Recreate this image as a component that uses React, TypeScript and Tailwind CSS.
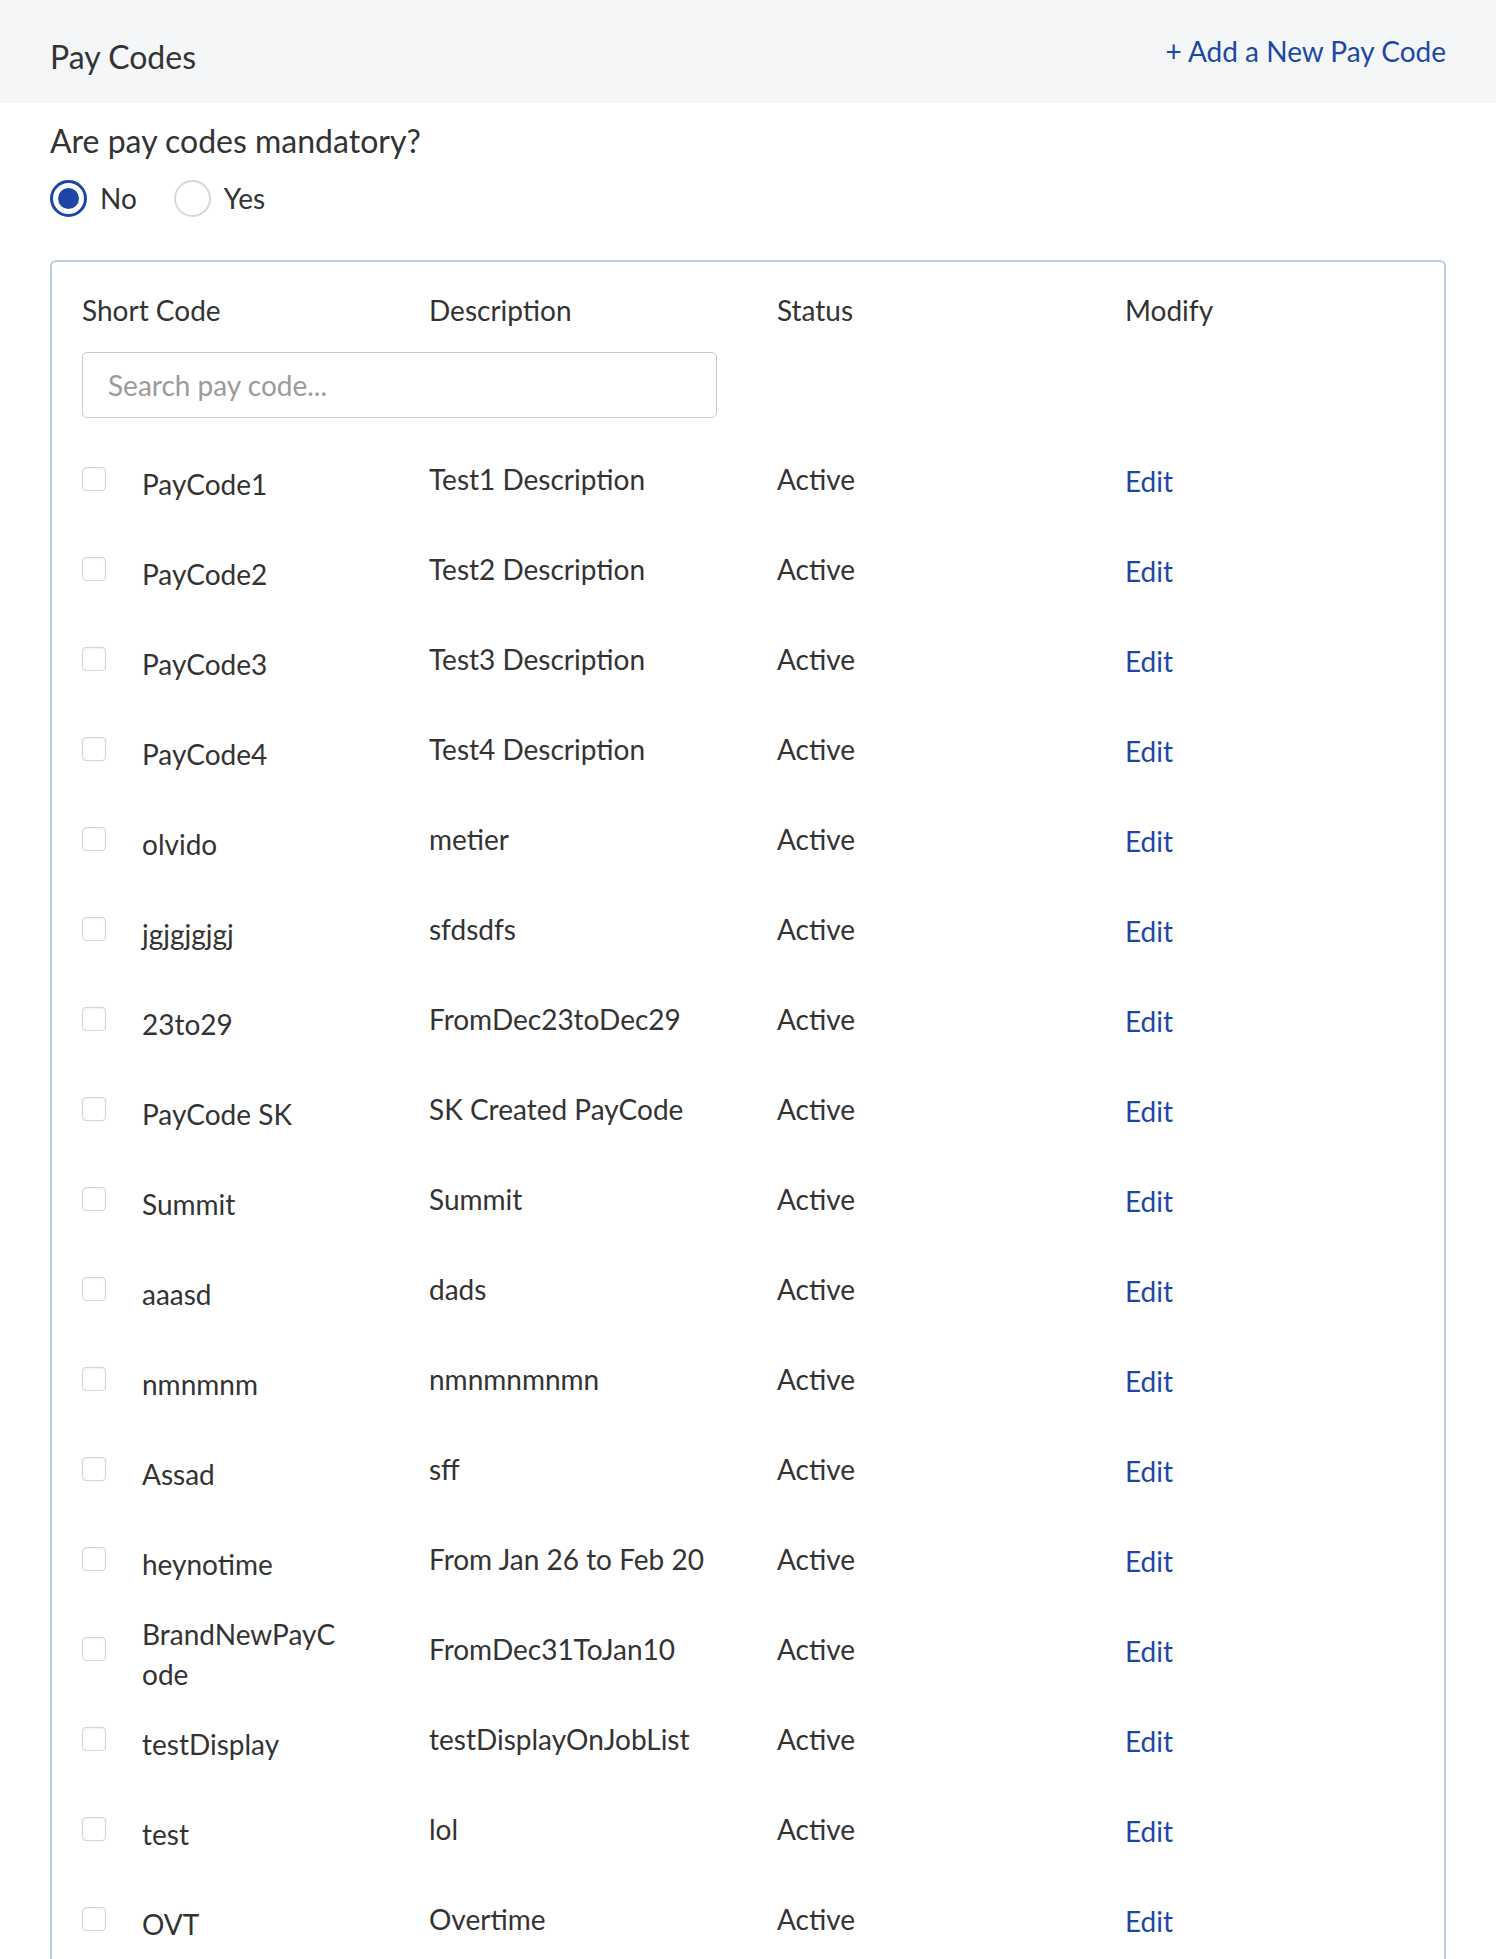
import { useState } from "react"

interface PayCode {
  code: string
  description: string
  status: string
}

const PAY_CODES: PayCode[] = [
  { code: "PayCode1", description: "Test1 Description", status: "Active" },
  { code: "PayCode2", description: "Test2 Description", status: "Active" },
  { code: "PayCode3", description: "Test3 Description", status: "Active" },
  { code: "PayCode4", description: "Test4 Description", status: "Active" },
  { code: "olvido", description: "metier", status: "Active" },
  { code: "jgjgjgjgj", description: "sfdsdfs", status: "Active" },
  { code: "23to29", description: "FromDec23toDec29", status: "Active" },
  { code: "PayCode SK", description: "SK Created PayCode", status: "Active" },
  { code: "Summit", description: "Summit", status: "Active" },
  { code: "aaasd", description: "dads", status: "Active" },
  { code: "nmnmnm", description: "nmnmnmnmn", status: "Active" },
  { code: "Assad", description: "sff", status: "Active" },
  { code: "heynotime", description: "From Jan 26 to Feb 20", status: "Active" },
  { code: "BrandNewPayCode", description: "FromDec31ToJan10", status: "Active" },
  { code: "testDisplay", description: "testDisplayOnJobList", status: "Active" },
  { code: "test", description: "lol", status: "Active" },
  { code: "OVT", description: "Overtime", status: "Active" },
]

function Radio({ checked, label, onClick }: { checked: boolean; label: string; onClick: () => void }) {
  return (
    <button type="button" onClick={onClick} className="flex items-center gap-[13px]">
      <span
        className={
          checked
            ? "flex h-[37px] w-[37px] items-center justify-center rounded-full border-[3px] border-[#1e47a5]"
            : "flex h-[37px] w-[37px] items-center justify-center rounded-full border-2 border-[#d5d9df]"
        }
      >
        {checked && <span className="h-[21px] w-[21px] rounded-full bg-[#1e47a5]" />}
      </span>
      <span className="text-[28px] leading-[40px] text-[#333]">{label}</span>
    </button>
  )
}

function Row({ item }: { item: PayCode }) {
  const [checked, setChecked] = useState(false)

  return (
    <div className="grid h-[90px] grid-cols-[347px_348px_348px_1fr] items-center">
      <div className="flex items-center">
        <input
          type="checkbox"
          checked={checked}
          onChange={(e) => setChecked(e.target.checked)}
          className="h-[24px] w-[24px] shrink-0 appearance-none rounded-[4px] border border-[#d4d4d4] bg-white shadow-[inset_0_1px_2px_rgba(0,0,0,0.06)] checked:bg-[#1e47a5]"
        />
        <div className="ml-[36px] w-[200px] break-all pt-[9px] leading-[40px]">{item.code}</div>
      </div>
      <div className="leading-[40px]">{item.description}</div>
      <div className="leading-[40px]">{item.status}</div>
      <div className="pt-[3px] leading-[40px]">
        <a href="#" className="text-[#1e47a5]">
          Edit
        </a>
      </div>
    </div>
  )
}

export default function App() {
  const [mandatory, setMandatory] = useState(false)
  const [search, setSearch] = useState("")

  const rows = PAY_CODES.filter((p) => {
    const q = search.trim().toLowerCase()
    if (!q) return true
    return p.code.toLowerCase().includes(q) || p.description.toLowerCase().includes(q)
  })

  return (
    <div className="min-h-screen bg-white font-['Lato','Liberation_Sans',sans-serif] text-[28px] text-[#333]">
      <div className="flex h-[103px] items-center justify-between bg-[#f5f6f8] px-[50px]">
        <h1 className="pt-[11px] text-[32px] leading-[40px] text-[#333]">Pay Codes</h1>
        <a href="#" className="pb-[1px] text-[28px] leading-[40px] text-[#1e47a5]">
          + Add a New Pay Code
        </a>
      </div>

      <div className="px-[50px]">
        <div className="mt-[18px] text-[32px] leading-[40px]">Are pay codes mandatory?</div>
        <div className="mt-[17px] flex items-center gap-[37px]">
          <Radio checked={!mandatory} label="No" onClick={() => setMandatory(false)} />
          <Radio checked={mandatory} label="Yes" onClick={() => setMandatory(true)} />
        </div>

        <div className="mt-[42px] rounded-[6px] border-2 border-[#bccfe2] px-[30px] pt-[28px]">
          <div className="grid grid-cols-[347px_348px_348px_1fr] leading-[40px]">
            <div>Short Code</div>
            <div>Description</div>
            <div>Status</div>
            <div>Modify</div>
          </div>
          <input
            value={search}
            onChange={(e) => setSearch(e.target.value)}
            placeholder="Search pay code..."
            className="mt-[22px] h-[66px] w-[635px] rounded-[5px] border-[1.5px] border-[#cbcbcb] px-[25px] text-[28px] outline-none placeholder:text-[#9b9b9b]"
          />
          <div className="mt-[16px]">
            {rows.map((item) => (
              <Row key={item.code} item={item} />
            ))}
          </div>
        </div>
      </div>
    </div>
  )
}
